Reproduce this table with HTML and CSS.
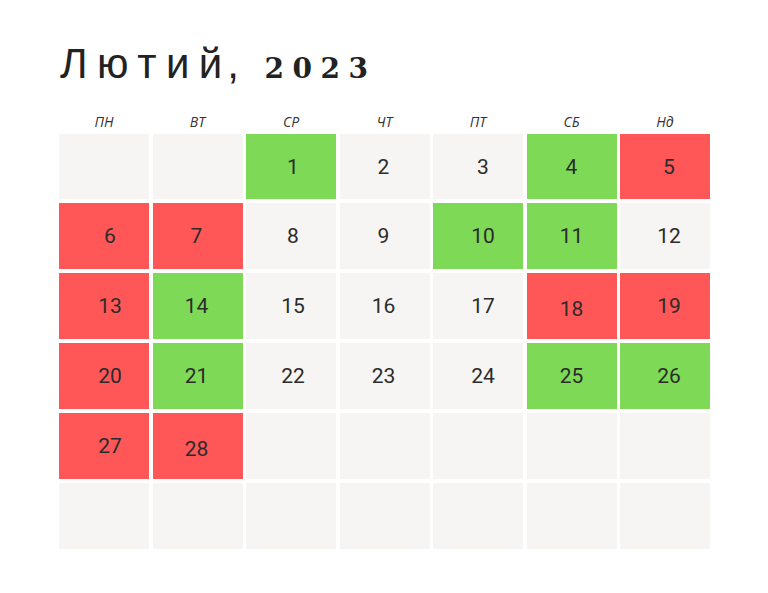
FILE: index.html
```html
<!DOCTYPE html>
<html lang="uk">
<head>
<meta charset="utf-8">
<link rel="stylesheet" href="styles.css">
</head>
<body>
<div class="page">
  <h1 class="title"><span class="month">Люти<span class="last">й</span>,</span><span class="year">2023</span></h1>
  <div class="weekdays">
    <div>ПН</div><div>ВТ</div><div>СР</div><div>ЧТ</div><div>ПТ</div><div>СБ</div><div>Нд</div>
  </div>
  <div class="grid">
    <div class="cell"></div>
    <div class="cell"></div>
    <div class="cell green">1</div>
    <div class="cell">2</div>
    <div class="cell">3</div>
    <div class="cell green">4</div>
    <div class="cell red">5</div>

    <div class="cell red">6</div>
    <div class="cell red">7</div>
    <div class="cell">8</div>
    <div class="cell">9</div>
    <div class="cell green">10</div>
    <div class="cell green">11</div>
    <div class="cell">12</div>

    <div class="cell red">13</div>
    <div class="cell green">14</div>
    <div class="cell">15</div>
    <div class="cell">16</div>
    <div class="cell">17</div>
    <div class="cell red low">18</div>
    <div class="cell red">19</div>

    <div class="cell red">20</div>
    <div class="cell green">21</div>
    <div class="cell">22</div>
    <div class="cell">23</div>
    <div class="cell">24</div>
    <div class="cell green">25</div>
    <div class="cell green">26</div>

    <div class="cell red">27</div>
    <div class="cell red low">28</div>
    <div class="cell"></div>
    <div class="cell"></div>
    <div class="cell"></div>
    <div class="cell"></div>
    <div class="cell"></div>

    <div class="cell"></div>
    <div class="cell"></div>
    <div class="cell"></div>
    <div class="cell"></div>
    <div class="cell"></div>
    <div class="cell"></div>
    <div class="cell"></div>
  </div>
</div>
</body>
</html>
```

FILE: styles.css
```css
html, body {
  margin: 0;
  padding: 0;
  background: #ffffff;
}

.page {
  padding: 36px 0 0 59px;
  width: 652px;
}

.title {
  margin: 0 0 0 1px;
  height: 56px;
  font-weight: normal;
  color: #222;
  white-space: nowrap;
  line-height: 56px;
}

.month {
  font-family: "Liberation Sans", Arial, sans-serif;
  font-size: 42px;
  letter-spacing: 9.5px;
}

.month .last {
  letter-spacing: 5px;
}

.year {
  margin-left: 16px;
  font-family: "DejaVu Serif", serif;
  font-weight: bold;
  font-size: 28px;
  letter-spacing: 8.5px;
}

.weekdays {
  margin-top: 18px;
  display: grid;
  grid-template-columns: repeat(7, 90px);
  column-gap: 3.5px;
  height: 22px;
  align-items: center;
  font-family: "Open Sans", sans-serif;
  font-style: italic;
  font-size: 14px;
  color: #333;
  text-align: center;
}

.grid {
  margin-top: 2px;
  display: grid;
  grid-template-columns: repeat(7, 90px);
  grid-template-rows: 65px repeat(5, 66px);
  column-gap: 3.5px;
  row-gap: 4px;
}

.cell {
  background: #f6f5f3;
  display: flex;
  align-items: center;
  justify-content: center;
  font-family: "Roboto", sans-serif;
  font-size: 21px;
  color: #2b2b2b;
}

.cell:nth-child(7n+1) { padding-left: 12px; }
.cell:nth-child(7n+2) { padding-right: 2px; }
.cell:nth-child(7n+3) { padding-left: 4px; }
.cell:nth-child(7n+4) { padding-right: 2px; }
.cell:nth-child(7n+5) { padding-left: 10px; }
.cell:nth-child(7n) { padding-left: 8px; }

.low {
  padding-top: 6px;
}

.green {
  background: #7ed957;
}

.red {
  background: #ff5757;
}
```
